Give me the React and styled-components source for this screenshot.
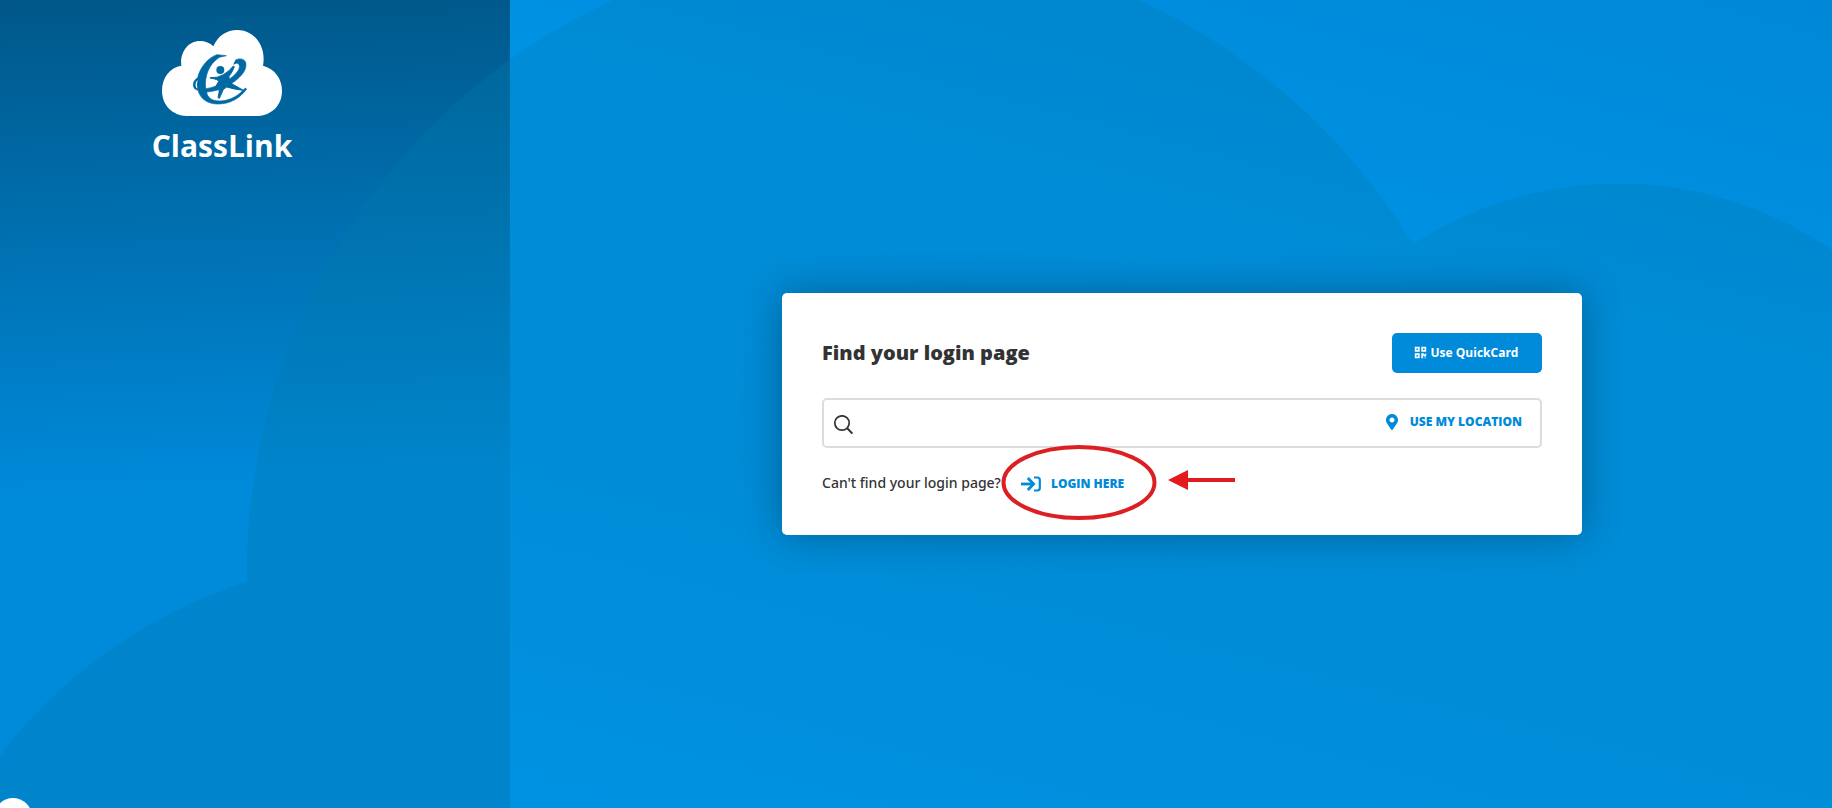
import React from 'react';
import styled, { createGlobalStyle } from 'styled-components';
import { FaMapMarkerAlt, FaQrcode } from 'react-icons/fa';

const GlobalStyle = createGlobalStyle`
  * {
    box-sizing: border-box;
  }

  body {
    margin: 0;
    font-family: 'Open Sans', 'Noto Sans', sans-serif;
    color: #333;
  }
`;

const Page = styled.div`
  position: relative;
  display: flex;
  min-height: 100vh;
  overflow: hidden;
`;

const Sidebar = styled.aside`
  position: relative;
  flex: 0 0 510px;
  padding: 30px 152px;
  background: linear-gradient(178deg, #005788 0%, #0067a2 18%, #008ada 60%);
`;

const Main = styled.main`
  position: relative;
  flex: 1;
  display: flex;
  align-items: center;
  justify-content: center;
  padding: 20px 0 0 22px;
  background: linear-gradient(195deg, #0088d6 0%, #0092e4 35%, #008edc 65%, #0092e2 100%);
`;

const Backdrop = styled.svg`
  position: absolute;
  inset: 0;
  width: 100%;
  height: 100%;
`;

const Brand = styled.div`
  position: relative;
  display: flex;
  flex-direction: column;
  align-items: center;
  width: 140px;
`;

const BrandName = styled.span`
  margin-top: 10px;
  font-size: 30px;
  line-height: 40px;
  font-weight: 700;
  color: #fff;
`;

const Card = styled.section`
  position: relative;
  width: 100%;
  max-width: 800px;
  padding: 40px;
  border-radius: 5px;
  background: #fff;
  box-shadow: 0 0 40px rgba(0, 0, 0, 0.3);
`;

const CardHeader = styled.div`
  display: flex;
  align-items: center;
  justify-content: space-between;
  margin-bottom: 25px;
`;

const Title = styled.h1`
  margin: 0;
  font-size: 20px;
  line-height: 28px;
  font-weight: 800;
`;

const QuickCardButton = styled.button`
  display: flex;
  align-items: center;
  justify-content: center;
  gap: 4px;
  width: 150px;
  height: 40px;
  padding: 0 2px 2px 0;
  border: 0;
  border-radius: 5px;
  background: #008ada;
  color: #fff;
  font-family: inherit;
  font-size: 12px;
  font-weight: 700;
`;

const SearchBox = styled.div`
  display: flex;
  align-items: center;
  height: 50px;
  padding: 0 18px 0 10px;
  border: 2px solid #dcdcdc;
  border-radius: 5px;
`;

const SearchLabel = styled.label`
  display: flex;
  padding-top: 4px;
`;

const SearchInput = styled.input`
  flex: 1;
  min-width: 0;
  height: 100%;
  margin-left: 10px;
  border: 0;
  outline: 0;
  background: transparent;
  font-family: inherit;
  font-size: 14px;
`;

const ActionButton = styled.button`
  display: flex;
  align-items: center;
  gap: 10px;
  padding: 0 0 ${({ $lift }) => $lift || 0}px;
  border: 0;
  background: transparent;
  color: #008ada;
  font-family: inherit;
  font-size: 12px;
  line-height: 20px;
  font-weight: 800;
`;

const HelpRow = styled.div`
  display: flex;
  align-items: center;
  margin-top: 23px;
  font-size: 14px;
  line-height: 24px;
`;

const HelpText = styled.span`
  font-family: 'Noto Sans', 'Open Sans', sans-serif;
  font-weight: 500;
`;

const LoginSpot = styled.div`
  position: relative;
  margin-left: 20px;
  padding-top: 2px;
`;

const Marker = styled.svg`
  position: absolute;
  top: -27px;
  left: -20px;
  overflow: visible;
  pointer-events: none;
`;

const HelpBubble = styled.div`
  position: absolute;
  left: -6px;
  bottom: -28px;
  width: 38px;
  height: 38px;
  border-radius: 50%;
  background: #fff;
`;

const Clouds = ({ id, viewBox, color, from, to }) => (
  <Backdrop viewBox={viewBox} preserveAspectRatio="xMinYMin slice" aria-hidden="true">
    <defs>
      <linearGradient id={id} gradientUnits="userSpaceOnUse" x1="900" y1="0" x2="700" y2="808">
        <stop offset="0" stopColor={color} stopOpacity={from} />
        <stop offset="1" stopColor={color} stopOpacity={to} />
      </linearGradient>
    </defs>
    <path
      fill={`url(#${id})`}
      d="M-103 1060 A501 501 0 0 1 247 582 A629 629 0 0 1 1413 244 A377 377 0 0 1 1995 559 V1060 Z"
    />
  </Backdrop>
);

const ClassLinkLogo = () => (
  <svg width="120" height="86" viewBox="66 30 360 258" aria-hidden="true">
    <path
      fill="#fff"
      d="M140 288C98 286 66 256 66 212C66 172 90 142 124 137C119 100 142 63 180 63C196 63 210 69 220 79C233 48 260 30 292 30C342 30 380 78 369 137C404 146 426 176 426 212C426 256 396 284 355 288Z"
    />
    <g fill="#0068a3">
      <path
        stroke="#0068a3"
        strokeWidth="2"
        d="M259 107L231 104C203 113 180 143 173 173C159 182 156 197 165 207L174 211C181 237 203 252 234 252C269 252 299 236 320 207L316 204C295 228 268 243 238 243C213 242 202 232 200 216C232 213 257 204 281 186C306 168 322 148 317 127C313 116 297 114 287 120L281 133C292 126 300 130 298 143C295 157 277 172 256 185C235 197 214 204 197 206C193 168 207 132 238 112Z"
      />
      <circle cx="241" cy="150" r="12" />
      <path
        stroke="#0068a3"
        strokeWidth="3"
        d="M210 173Q232 175 250 164Q268 154 280 138L283 140Q277 157 267 169L268 187Q285 197 310 211Q282 208 260 201Q247 207 245 220L238 235L234 233Q238 218 238 205Q234 202 227 200L236 184Q235 178 210 174Z"
      />
    </g>
    <path d="M173 180Q160 193 172 207Q169 193 173 180Z" fill="#fff" />
  </svg>
);

const SearchIcon = () => (
  <svg width="20" height="20" viewBox="0 0 20 20" fill="none" stroke="#333" strokeWidth="1.7">
    <circle cx="8" cy="8" r="7.2" />
    <path d="M13 13L18.4 18.6" strokeWidth="2" />
  </svg>
);

const LoginIcon = () => (
  <svg width="20" height="16" viewBox="0 0 20 16" fill="none" stroke="currentColor">
    <path d="M0 8H12" strokeWidth="2.8" />
    <path d="M6.8 2L12.6 8L6.8 14" strokeWidth="2.8" />
    <path d="M13 1.5H16.4Q18.8 1.5 18.8 4V12Q18.8 14.5 16.4 14.5H13" strokeWidth="2.2" />
  </svg>
);

const App = () => {
  return (
    <Page>
      <GlobalStyle />
      <Sidebar>
        <Clouds id="sideCloud" viewBox="0 0 510 808" color="#007aab" from={0.3} to={0.3} />
        <Brand>
          <ClassLinkLogo />
          <BrandName>ClassLink</BrandName>
        </Brand>
      </Sidebar>

      <Main>
        <Clouds id="mainCloud" viewBox="510 0 1322 808" color="#0078a8" from={0.27} to={0} />
        <Card>
          <CardHeader>
            <Title>Find your login page</Title>
            <QuickCardButton type="button">
              <FaQrcode size={13} />
              Use QuickCard
            </QuickCardButton>
          </CardHeader>

          <SearchBox>
            <SearchLabel htmlFor="school" aria-label="Search">
              <SearchIcon />
            </SearchLabel>
            <SearchInput id="school" type="text" />
            <ActionButton type="button" $lift={3}>
              <FaMapMarkerAlt size={16} />
              USE MY LOCATION
            </ActionButton>
          </SearchBox>

          <HelpRow>
            <HelpText>Can't find your login page?</HelpText>
            <LoginSpot>
              <ActionButton type="button">
                <LoginIcon />
                LOGIN HERE
              </ActionButton>
              <Marker width="236" height="76" viewBox="0 0 236 76" aria-hidden="true">
                <ellipse cx="78" cy="37.5" rx="75.5" ry="35.5" fill="none" stroke="#dc1f23" strokeWidth="4" />
                <path d="M167 35L187 25V33H234V37H187V45Z" fill="#e41b1e" />
              </Marker>
            </LoginSpot>
          </HelpRow>
        </Card>
      </Main>
      <HelpBubble />
    </Page>
  );
};

export default App;
